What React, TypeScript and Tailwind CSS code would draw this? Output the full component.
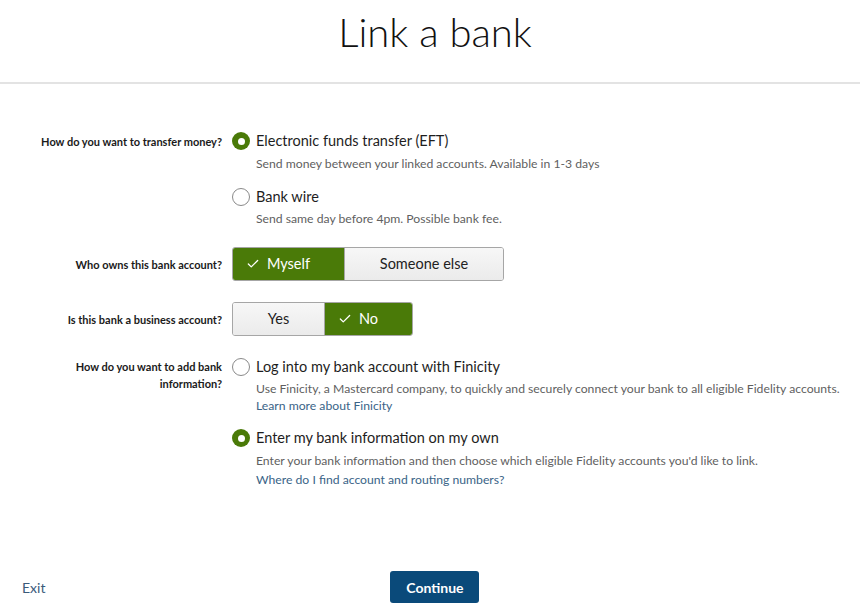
import { Check } from 'lucide-react';

function Radio({ checked }: { checked?: boolean }) {
  return checked ? (
    <span className="flex h-[18px] w-[18px] shrink-0 items-center justify-center rounded-full bg-[#4a7a08]">
      <span className="h-[7px] w-[7px] rounded-full bg-white" />
    </span>
  ) : (
    <span className="h-[18px] w-[18px] shrink-0 rounded-full border border-[#8a8a8a] bg-white" />
  );
}

interface OptionProps {
  checked?: boolean;
  title: string;
  desc: string;
  descGap?: string;
  link?: string;
  linkGap?: string;
}

function Option({ checked, title, desc, descGap = 'mt-[5px]', link, linkGap = 'mt-px' }: OptionProps) {
  return (
    <div>
      <div className="flex items-center gap-[6px]">
        <Radio checked={checked} />
        <span className="text-[14.5px] leading-[18px] text-[#1e1e1e]">{title}</span>
      </div>
      <p className={`${descGap} pl-[24px] text-[12.2px] leading-[16px] text-[#5f5f5f]`}>{desc}</p>
      {link && <p className={`${linkGap} pl-[24px] text-[12.2px] leading-[16px] text-[#3a6487]`}>{link}</p>}
    </div>
  );
}

function Toggle({ items }: { items: { label: string; width: string; on?: boolean }[] }) {
  return (
    <div className="flex h-[34px] rounded-[3px] border border-[#a6a6a6] overflow-hidden">
      {items.map((it, i) => (
        <div
          key={it.label}
          className={`flex items-center justify-center text-[14.5px] ${it.width} ${
            it.on ? 'bg-[#4a7a08] text-white' : 'bg-gradient-to-b from-[#f7f7f7] to-[#ebebeb] text-[#222]'
          } ${i > 0 ? 'border-l border-[#a6a6a6]' : ''}`}
        >
          <span className="relative">
            {it.on && (
              <Check size={14} strokeWidth={2.2} className="absolute right-full top-1/2 mr-[7px] -translate-y-1/2" />
            )}
            {it.label}
          </span>
        </div>
      ))}
    </div>
  );
}

function Label({ children }: { children: React.ReactNode }) {
  return <div className="text-right text-[11px] font-bold leading-[17px] text-[#1a1a1a]">{children}</div>;
}

export default function App() {
  return (
    <div className="flex min-h-screen flex-col bg-white" style={{ fontFamily: 'Lato, "Open Sans", sans-serif' }}>
      <header className="flex h-[84px] justify-center border-b-2 border-[#e3e3e3] pl-[10px] pt-[7px]">
        <h1 className="text-[40px] font-light leading-[50px] text-[#111]">Link a bank</h1>
      </header>

      <main className="grid grid-cols-[222px_1fr] gap-x-[10px] pt-[48px]">
        <div className="pt-[1px]">
          <Label>How do you want to transfer money?</Label>
        </div>
        <div className="flex flex-col gap-[16px]">
          <Option
            checked
            title="Electronic funds transfer (EFT)"
            desc="Send money between your linked accounts. Available in 1-3 days"
            descGap="mt-[6px]"
          />
          <Option title="Bank wire" desc="Send same day before 4pm. Possible bank fee." descGap="mt-[5px]" />
        </div>

        <div className="mt-[20px] flex items-center justify-end">
          <Label>Who owns this bank account?</Label>
        </div>
        <div className="mt-[20px]">
          <div className="w-fit">
            <Toggle
              items={[
                { label: 'Myself', width: 'w-[111px]', on: true },
                { label: 'Someone else', width: 'w-[159px]' },
              ]}
            />
          </div>
        </div>

        <div className="mt-[21px] flex items-center justify-end">
          <Label>Is this bank a business account?</Label>
        </div>
        <div className="mt-[21px]">
          <div className="w-fit">
            <Toggle
              items={[
                { label: 'Yes', width: 'w-[91px]' },
                { label: 'No', width: 'w-[88px]', on: true },
              ]}
            />
          </div>
        </div>

        <div className="mt-[22px] flex justify-end">
          <div className="w-[160px]">
            <Label>How do you want to add bank information?</Label>
          </div>
        </div>
        <div className="mt-[22px] flex flex-col gap-[15px]">
          <Option
            title="Log into my bank account with Finicity"
            desc="Use Finicity, a Mastercard company, to quickly and securely connect your bank to all eligible Fidelity accounts."
            link="Learn more about Finicity"
          />
          <Option
            checked
            title="Enter my bank information on my own"
            desc="Enter your bank information and then choose which eligible Fidelity accounts you'd like to link."
            descGap="mt-[6px]"
            link="Where do I find account and routing numbers?"
            linkGap="mt-[3px]"
          />
        </div>
      </main>

      <footer className="mt-auto flex items-center pb-[11px] pl-[22px]">
        <span className="text-[14px] text-[#3a5a7a]">Exit</span>
        <button className="ml-[345px] h-[32px] w-[89px] rounded-[3px] bg-[#0a4a7a] text-[14px] font-bold text-white">
          Continue
        </button>
      </footer>
    </div>
  );
}
